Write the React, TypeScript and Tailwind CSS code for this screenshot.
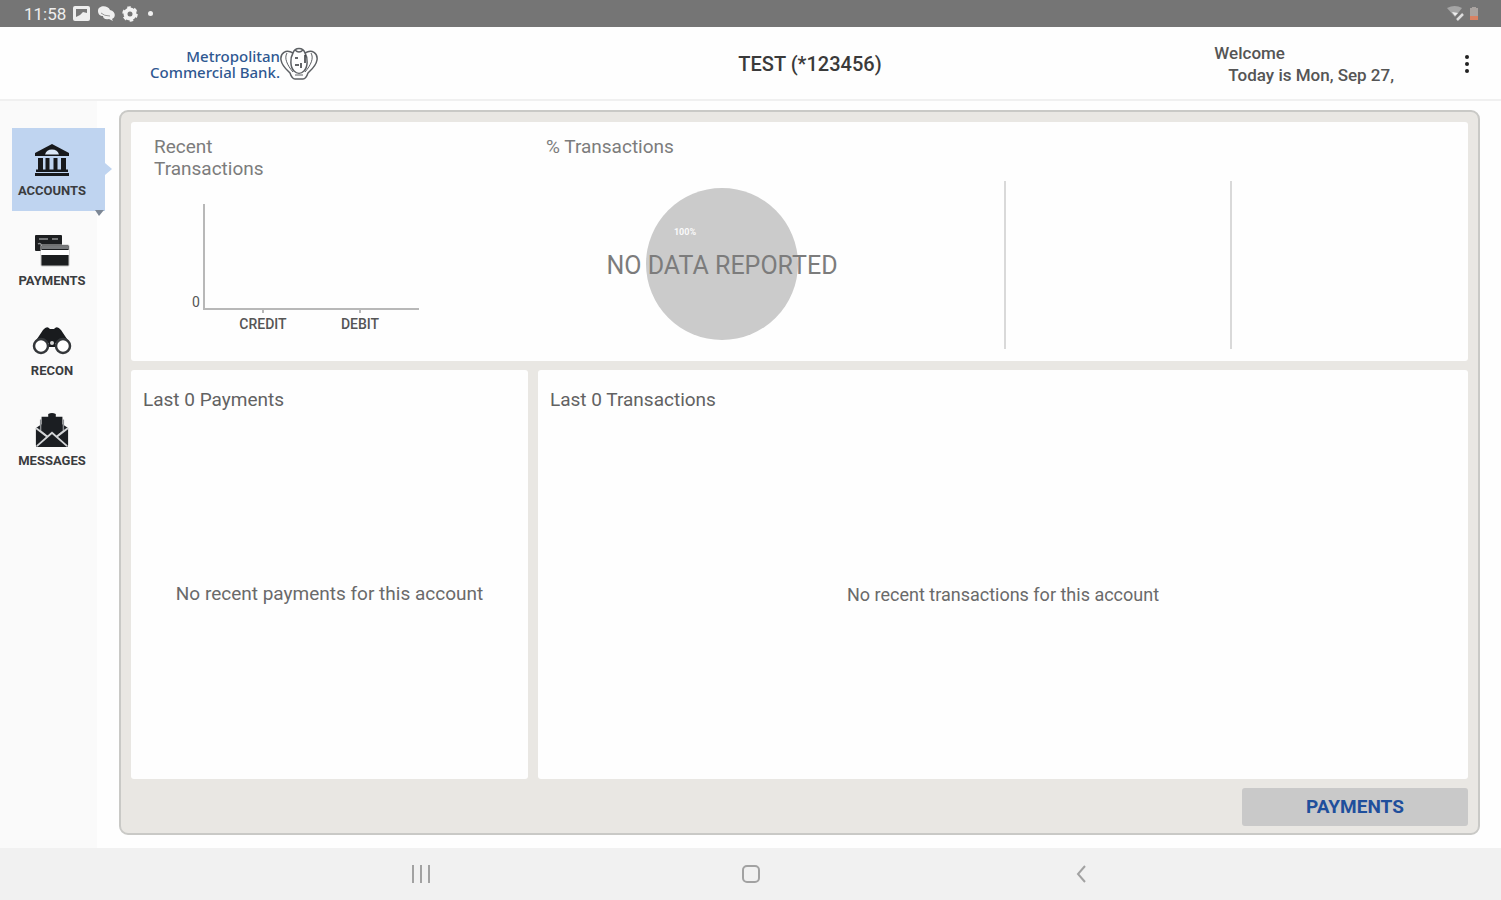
import type { ReactNode } from "react";

function BankIcon() {
  return (
    <svg viewBox="0 0 36 36" className="size-9" aria-hidden="true">
      <path d="M18 2 35 11v3H1v-3z" fill="#17191c" />
      <path d="M11 12.500q1.500-5 7-5t7 5z" fill="#dbe7f6" />
      <path d="M4 16h5v12H4zM11.500 16h4v12h-4zM19.500 16h4v12h-4zM27 16h5v12h-5z" fill="#17191c" />
      <path d="M2 27.500h32v2.500H2zM1 31h34v3H1z" fill="#17191c" />
    </svg>
  );
}

function CardsIcon() {
  return (
    <svg viewBox="0 0 36 36" className="size-9" aria-hidden="true">
      <rect x="1" y="3" width="27" height="16" rx="1" fill="#1c1e20" />
      <path d="M5 7h9M18 7h6M4 12q3-2 4 3" fill="none" stroke="#8f9193" strokeWidth="1.500" />
      <rect x="7" y="13" width="28" height="21" rx="1" fill="#1c1e20" stroke="#c4c4c4" />
      <path d="M7 18h28v5H7z" fill="#fff" />
      <path d="M8 15.500h26" stroke="#77797b" strokeWidth="3" />
    </svg>
  );
}

function BinocularsIcon() {
  return (
    <svg viewBox="0 0 40 36" className="h-9 w-10" aria-hidden="true">
      <path d="M11 8q4-5 7-1h4q3-4 7 1l8 12-10 4-3-3h-8l-3 3-10-4z" fill="#191b1e" />
      <path d="M17 18h6v7h-6z" fill="#191b1e" />
      <circle cx="20" cy="21" r="2" fill="#d8d8d8" />
      <circle cx="9" cy="24" r="7" fill="#fff" stroke="#34373a" strokeWidth="2.500" />
      <circle cx="31" cy="24" r="7" fill="#fff" stroke="#34373a" strokeWidth="2.500" />
    </svg>
  );
}

function MailIcon() {
  return (
    <svg viewBox="0 0 36 38" className="h-9 w-9" aria-hidden="true">
      <path d="M14 2q4-2 8 0v3h7v8l6 4v18q0 2-2 2H3q-2 0-2-2V17l6-4V5h7z" fill="#1b1e22" />
      <path d="M6 8v12l5 4M30 8v12l-5 4" fill="none" stroke="#8d9094" strokeWidth="1.500" />
      <path d="m1 17 12 9M35 17l-12 9M2 36l16-14 16 14" fill="none" stroke="#d3d5d7" strokeWidth="2" />
    </svg>
  );
}

function LogoMark() {
  return (
    <svg viewBox="0 0 38 34" className="h-[34px] w-[38px]" fill="none" stroke="#5d6064" strokeWidth="1.500" aria-hidden="true">
      <path d="M13 6C6 2 0 6 1 13c1 6 5 9 9 13q2 6 5 6h8q3 0 5-6c4-4 8-7 9-13 1-7-5-11-12-7" />
      <path d="M13 6c2-6 10-6 12 0 3 5 3 14-1 18-3 3-7 3-10 0-4-4-4-13-1-18zM15 3q4 4 8 0" />
      <path d="M7 6c-3 5 0 12 6 19M31 6c3 5 0 12-6 19M15 28h8" strokeWidth="1" />
      <path d="M15 11h3M15 18h4M25 8v8M21 16v5" stroke="#303337" />
    </svg>
  );
}

function NavItem({ label, active, children }: { label: string; active?: boolean; children: ReactNode }) {
  return (
    <li className="relative">
      <button
        type="button"
        aria-current={active ? "page" : undefined}
        className={`flex h-[83px] w-[93px] flex-col items-center gap-1 pt-[14px] pr-[13px] text-[13px] leading-[18px] font-bold text-[#3a3c3f] ${
          active ? "bg-[#bfd4f0]" : ""
        }`}
      >
        {children}
        <span>{label}</span>
      </button>
      {active && (
        <>
          <svg viewBox="0 0 7 12" className="absolute top-[35px] left-[93px] h-3 w-[7px]" aria-hidden="true">
            <path d="M0 0 7 6 0 12z" fill="#bfd4f0" />
          </svg>
          <svg viewBox="0 0 9 7" className="absolute top-[82px] left-[83px] h-[7px] w-[9px]" aria-hidden="true">
            <path d="M0 0h9L4 6z" fill="#7d8896" />
          </svg>
        </>
      )}
    </li>
  );
}

function EmptyCard({ title, message, small }: { title: string; message: string; small?: boolean }) {
  return (
    <section className="flex flex-col rounded-[3px] bg-[#fefefe] px-3 pt-5">
      <h2 className="text-[19px] leading-5 text-[#626262]">{title}</h2>
      <p className={`flex flex-1 items-center justify-center text-[#6a6a6a] ${small ? "text-[18px]" : "text-[19px]"}`}>
        {message}
      </p>
    </section>
  );
}

function StatusBar() {
  return (
    <div className="flex h-[27px] items-center justify-between bg-[#757575] pr-[22px] pl-6 text-white">
      <div className="flex items-center gap-[7px]">
        <span className="text-[17px] leading-5 text-[#eee]">11:58</span>
        <svg viewBox="0 0 17 15" className="h-[15px] w-[17px]" aria-hidden="true">
          <rect width="17" height="15" rx="2" fill="#eee" />
          <path d="M3 3h11v4l-4-1-3 3-4 2z" fill="#777" />
        </svg>
        <svg viewBox="0 0 18 15" className="h-[15px] w-[18px]" aria-hidden="true">
          <path d="M1 5c0-6 10-6 12-1 6 1 6 8 2 9l1 2-4-2c-4 1-6-1-6-3C3 10 1 8 1 5z" fill="#f0f0f0" />
          <path d="M4 7q3 3 9 3" stroke="#999" fill="none" />
        </svg>
        <svg viewBox="0 0 16 16" className="size-4" aria-hidden="true">
          <circle cx="8" cy="8" r="4.500" fill="none" stroke="#f2f2f2" strokeWidth="4" />
          <circle cx="8" cy="8" r="6.500" fill="none" stroke="#f2f2f2" strokeWidth="2.500" strokeDasharray="3.400 3.400" />
        </svg>
        <span className="ml-[3px] size-[5px] rounded-full bg-[#f0f0f0]" />
      </div>
      <div className="flex items-center gap-1">
        <svg viewBox="0 0 18 15" className="h-[15px] w-[18px]" aria-hidden="true">
          <path d="M0 2q8-4 15 0l-7 9z" fill="#a5a5a5" />
          <path d="m5 6 3 4 3-3z" fill="#eee" />
          <path d="m10 14 6-6" stroke="#ddd" strokeWidth="2.500" />
        </svg>
        <svg viewBox="0 0 10 14" className="h-[14px] w-[10px]" aria-hidden="true">
          <path d="M3 0h4v1h2v9H1V1h2z" fill="#a9a3a0" />
          <path d="M1 9h8v4H1z" fill="#d98263" />
        </svg>
      </div>
    </div>
  );
}

export default function App() {
  return (
    <div className="flex min-h-screen flex-col bg-[#fefefe] font-[Roboto,sans-serif]">
      <StatusBar />

      <header className="grid h-[74px] grid-cols-[1fr_auto_1fr] items-center border-b-2 border-[#f0f0f0] pt-[2px] pl-[119px]">
        <a href="#home" className="flex items-center pl-[31px]">
          <span className="flex flex-col items-end font-['Noto_Sans',sans-serif] text-[15px] leading-[16px] font-medium text-[#2f5891]">
            <span>Metropolitan</span>
            <span>Commercial Bank.</span>
          </span>
          <LogoMark />
        </a>
        <h1 className="text-[20px] font-medium text-[#3a3a3a]">TEST (*123456)</h1>
        <div className="flex items-center justify-end gap-[64px] pr-[25px]">
          <p className="text-[17px] leading-[22px] font-medium text-[#555]">
            Welcome
            <span className="block pl-[14px]">Today is Mon, Sep 27,</span>
          </p>
          <button type="button" aria-label="More options" className="flex h-8 w-[18px] items-center justify-center">
            <svg viewBox="0 0 4 18" className="h-[18px] w-1" fill="#222" aria-hidden="true">
              <circle cx="2" cy="2" r="2" />
              <circle cx="2" cy="9" r="2" />
              <circle cx="2" cy="16" r="2" />
            </svg>
          </button>
        </div>
      </header>

      <div className="flex flex-1">
        <nav className="mr-[22px] w-[97px] shrink-0 bg-[#fafafa] pt-[27px] pl-3">
          <ul className="flex flex-col gap-[7px]">
            <NavItem label="ACCOUNTS" active>
              <BankIcon />
            </NavItem>
            <NavItem label="PAYMENTS">
              <CardsIcon />
            </NavItem>
            <NavItem label="RECON">
              <BinocularsIcon />
            </NavItem>
            <NavItem label="MESSAGES">
              <MailIcon />
            </NavItem>
          </ul>
        </nav>

        <main className="mt-[9px] mr-[21px] mb-[13px] flex flex-1 flex-col rounded-[9px] border-2 border-[#c9c9c6] bg-[#e9e7e3] px-[10px] pt-[10px] pb-[7px]">
          <section className="grid grid-cols-[407fr_466fr_226fr_238fr] rounded-[3px] bg-[#fefefe] pb-3">
            <div className="pt-[14px] pl-[23px]">
              <h2 className="w-[120px] text-[19px] leading-[22px] text-[#7c7c7c]">Recent Transactions</h2>
              <svg
                viewBox="0 0 240 135"
                className="mt-6 ml-[30px] h-[135px] w-[240px]"
                fontSize="14"
                fill="#555"
                textAnchor="middle"
                role="img"
                aria-label="Recent credit and debit transactions"
              >
                <path d="M20 0v105h215M79 105v4M176 105v4" fill="none" stroke="#b8b8b8" strokeWidth="2" />
                <text x="12" y="103">0</text>
                <text x="79" y="125" fontWeight="500">CREDIT</text>
                <text x="176" y="125" fontWeight="500">DEBIT</text>
              </svg>
            </div>
            <div className="pt-[14px] pl-2">
              <h2 className="text-[19px] leading-[22px] text-[#7c7c7c]">% Transactions</h2>
              <svg
                viewBox="0 0 240 162"
                className="mt-[29px] ml-[56px] h-[162px] w-[240px]"
                textAnchor="middle"
                role="img"
                aria-label="No data reported"
              >
                <circle cx="120" cy="77" r="76" fill="#cbcbcb" />
                <text x="83" y="48" fontSize="9" fontWeight="700" fill="#fafafa">100%</text>
                <text x="120" y="87" fontSize="25" fill="#7c7c7c">NO DATA REPORTED</text>
              </svg>
            </div>
            <div className="mt-[59px] border-l-2 border-[#d9d9d9]" />
            <div className="mt-[59px] border-l-2 border-[#d9d9d9]" />
          </section>

          <div className="mt-[9px] grid flex-1 grid-cols-[397fr_930fr] gap-[10px]">
            <EmptyCard title="Last 0 Payments" message="No recent payments for this account" />
            <EmptyCard title="Last 0 Transactions" message="No recent transactions for this account" small />
          </div>

          <button
            type="button"
            className="mt-[9px] h-[38px] w-[226px] self-end rounded-[3px] bg-[#c9c9c9] text-[19px] font-bold text-[#1f4f9c]"
          >
            PAYMENTS
          </button>
        </main>
      </div>

      <nav aria-label="System" className="flex h-[52px] items-center justify-center gap-[306px] bg-[#f1f1f1]">
        <button type="button" aria-label="Recent apps" className="flex size-6 items-center justify-center">
          <svg viewBox="0 0 18 18" className="size-[18px]" stroke="#a2a2a2" strokeWidth="2" aria-hidden="true">
            <path d="M1 0v18M9 0v18M17 0v18" />
          </svg>
        </button>
        <button type="button" aria-label="Home" className="flex size-6 items-center justify-center">
          <svg viewBox="0 0 18 18" className="size-[18px]" fill="none" stroke="#a2a2a2" strokeWidth="2" aria-hidden="true">
            <rect x="1" y="1" width="16" height="16" rx="4" />
          </svg>
        </button>
        <button type="button" aria-label="Back" className="flex size-6 items-center justify-center">
          <svg viewBox="0 0 10 18" className="h-[18px] w-[10px]" fill="none" stroke="#a2a2a2" strokeWidth="2" aria-hidden="true">
            <path d="M9 1 2 9l7 8" />
          </svg>
        </button>
      </nav>
    </div>
  );
}
